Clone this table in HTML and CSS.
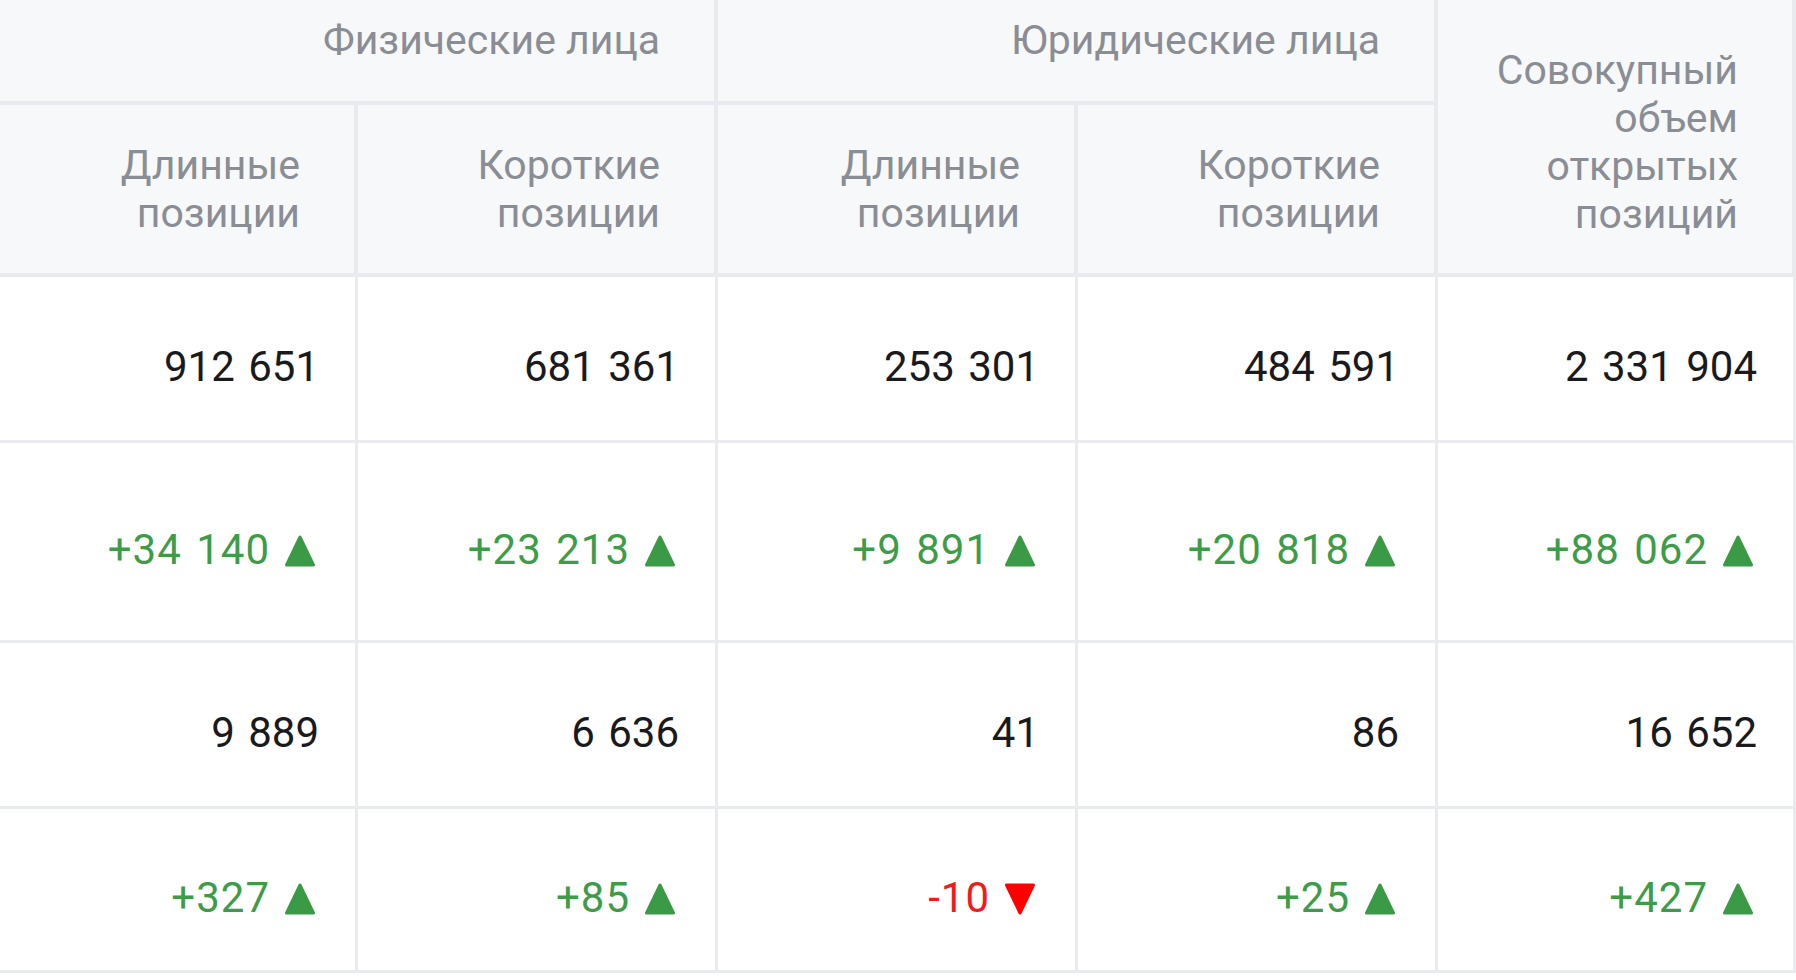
FILE: index.html
```html
<!DOCTYPE html>
<html lang="ru">
<head>
<meta charset="utf-8">
<title>Открытые позиции</title>
<link rel="stylesheet" href="styles.css">
</head>
<body>
<table class="stats">
  <colgroup>
    <col class="c1"><col class="c2"><col class="c3"><col class="c4"><col class="c5">
  </colgroup>
  <thead>
    <tr class="hrow1">
      <th colspan="2">Физические лица</th>
      <th colspan="2">Юридические лица</th>
      <th rowspan="2" class="total">Совокупный объем открытых позиций</th>
    </tr>
    <tr class="hrow2">
      <th>Длинные позиции</th>
      <th>Короткие позиции</th>
      <th>Длинные позиции</th>
      <th>Короткие позиции</th>
    </tr>
  </thead>
  <tbody>
    <tr class="row-a">
      <td>912 651</td><td>681 361</td><td>253 301</td><td>484 591</td><td>2 331 904</td>
    </tr>
    <tr class="row-b">
      <td><span class="chg up">+34 140<svg class="tri" viewBox="0 0 30 32"><polygon points="15,2 28.5,30 1.5,30"/></svg></span></td>
      <td><span class="chg up">+23 213<svg class="tri" viewBox="0 0 30 32"><polygon points="15,2 28.5,30 1.5,30"/></svg></span></td>
      <td><span class="chg up">+9 891<svg class="tri" viewBox="0 0 30 32"><polygon points="15,2 28.5,30 1.5,30"/></svg></span></td>
      <td><span class="chg up">+20 818<svg class="tri" viewBox="0 0 30 32"><polygon points="15,2 28.5,30 1.5,30"/></svg></span></td>
      <td><span class="chg up">+88 062<svg class="tri" viewBox="0 0 30 32"><polygon points="15,2 28.5,30 1.5,30"/></svg></span></td>
    </tr>
    <tr class="row-a">
      <td>9 889</td><td>6 636</td><td>41</td><td>86</td><td>16 652</td>
    </tr>
    <tr class="row-c">
      <td><span class="chg up">+327<svg class="tri" viewBox="0 0 30 32"><polygon points="15,2 28.5,30 1.5,30"/></svg></span></td>
      <td><span class="chg up">+85<svg class="tri" viewBox="0 0 30 32"><polygon points="15,2 28.5,30 1.5,30"/></svg></span></td>
      <td><span class="chg down">-10<svg class="tri" viewBox="0 0 30 32"><polygon points="1.5,2 28.5,2 15,30"/></svg></span></td>
      <td><span class="chg up">+25<svg class="tri" viewBox="0 0 30 32"><polygon points="15,2 28.5,30 1.5,30"/></svg></span></td>
      <td><span class="chg up">+427<svg class="tri" viewBox="0 0 30 32"><polygon points="15,2 28.5,30 1.5,30"/></svg></span></td>
    </tr>
  </tbody>
</table>
</body>
</html>
```

FILE: styles.css
```css
html, body {
  margin: 0;
  padding: 0;
  background: #ffffff;
}

.stats {
  width: 1796px;
  table-layout: fixed;
  border-collapse: separate;
  border-spacing: 0;
  font-family: Roboto, "Noto Sans", sans-serif;
}

.c1 { width: 358px; }
.c2, .c3, .c4 { width: 360px; }
.c5 { width: 358px; }

.stats th {
  background: #f7f8fa;
  color: #8a8e94;
  font-weight: 400;
  font-size: 41px;
  line-height: 48px;
  text-align: right;
  vertical-align: bottom;
  padding: 0 54px 36px 40px;
  border-right: 4px solid #e8eaed;
  border-bottom: 4px solid #e8eaed;
}

.hrow1 th {
  padding-bottom: 37px;
}

.hrow1 th.total {
  padding-bottom: 35px;
}

.hrow1 { height: 105px; }
.hrow2 { height: 172px; }

.stats td {
  color: #1a1a1c;
  font-size: 42px;
  line-height: 48px;
  word-spacing: 3px;
  text-align: right;
  vertical-align: middle;
  padding: 16px 36px 0 20px;
  border-right: 3px solid #eaebee;
  border-bottom: 3px solid #eaebee;
  white-space: nowrap;
}

.row-a { height: 166px; }
.row-b { height: 200px; }
.row-c { height: 164px; }

.chg {
  display: inline-flex;
  align-items: baseline;
  gap: 15px;
  letter-spacing: 1px;
  margin-right: 4px;
}

.chg.up { color: #3e9c48; }
.chg.down { color: #f01c1c; }

.tri {
  width: 30px;
  height: 32px;
  align-self: center;
  position: relative;
  top: 1px;
}

.up .tri polygon {
  fill: #3a9a45;
  stroke: #3a9a45;
  stroke-width: 3;
  stroke-linejoin: round;
}

.down .tri polygon {
  fill: #ff0000;
  stroke: #ff0000;
  stroke-width: 3;
  stroke-linejoin: round;
}
```
